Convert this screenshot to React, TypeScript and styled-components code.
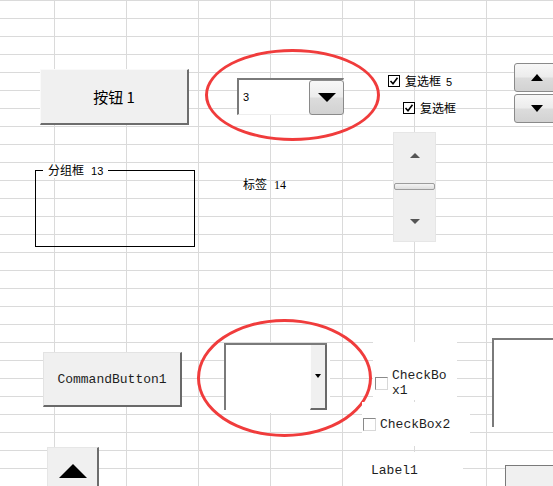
import React from 'react';
import styled, { createGlobalStyle, css } from 'styled-components';

const GlobalStyle = createGlobalStyle`
  html, body {
    margin: 0;
    padding: 0;
    background: #fff;
  }
  body {
    font-family: "Noto Sans CJK SC", "Noto Sans", sans-serif;
  }
`;

// Excel-like sheet: gridlines every 72 x 18 px, controls sit freely on it
const Sheet = styled.div`
  position: relative;
  width: 553px;
  height: 486px;
  overflow: hidden;
  background-color: #fff;
  background-image:
    linear-gradient(to right, #dadada 0 1px, transparent 1px),
    linear-gradient(to bottom, #dadada 0 1px, transparent 1px);
  background-size: 72px 18px;
  background-position: 54px 0, 0 0;
`;

const cjk = css`
  font-family: "Noto Sans CJK SC", "Noto Sans", sans-serif;
`;

const mono = css`
  font-family: "Liberation Mono", "DejaVu Sans Mono", monospace;
  font-size: 13px;
  color: #1e1e1e;
`;

const FormButton = styled.div`
  position: absolute;
  left: 40px;
  top: 69px;
  width: 149px;
  height: 56px;
  box-sizing: border-box;
  display: flex;
  align-items: center;
  justify-content: center;
  background: #f0f0f0;
  border-top: 1px solid #fafafa;
  border-left: 1px solid #fafafa;
  border-right: 2px solid #6d6d6d;
  border-bottom: 2px solid #6d6d6d;
  ${cjk};
  font-size: 15px;
  color: #000;
`;

const ComboField = styled.div`
  position: absolute;
  left: 237px;
  top: 78px;
  width: 107px;
  height: 37px;
  box-sizing: border-box;
  display: flex;
  align-items: center;
  background: #fff;
  border-top: 2px solid #7a7a7a;
  border-left: 2px solid #7a7a7a;
  border-right: 1px solid #eeeeee;
  border-bottom: 1px solid #eeeeee;
`;

const ComboValue = styled.span`
  flex: 1;
  padding-left: 4px;
  font-family: "Liberation Sans", Arial, sans-serif;
  font-size: 11px;
  color: #000;
`;

const GlossButton = styled.div<{ $h: number }>`
  width: 35px;
  height: ${p => p.$h}px;
  box-sizing: border-box;
  display: flex;
  align-items: center;
  justify-content: center;
  border: 1px solid #8a8a8a;
  border-radius: 3px;
  background: linear-gradient(to bottom, #f7f7f7 0%, #ececec 48%, #dcdcdc 52%, #d2d2d2 100%);
`;

const DropSlot = styled.div`
  align-self: flex-start;
  margin-right: -1px;
`;

const TriDown = styled.span<{ $w: number; $h: number; $c?: string }>`
  width: 0;
  height: 0;
  border-left: ${p => p.$w / 2}px solid transparent;
  border-right: ${p => p.$w / 2}px solid transparent;
  border-top: ${p => p.$h}px solid ${p => p.$c || '#000'};
`;

const TriUp = styled.span<{ $w: number; $h: number; $c?: string }>`
  width: 0;
  height: 0;
  border-left: ${p => p.$w / 2}px solid transparent;
  border-right: ${p => p.$w / 2}px solid transparent;
  border-bottom: ${p => p.$h}px solid ${p => p.$c || '#000'};
`;

const Ellipse = styled.div<{ $x: number; $y: number; $w: number; $h: number }>`
  position: absolute;
  left: ${p => p.$x}px;
  top: ${p => p.$y}px;
  width: ${p => p.$w}px;
  height: ${p => p.$h}px;
  box-sizing: border-box;
  border: 3px solid #f03c3c;
  border-radius: 50%;
  pointer-events: none;
`;

const FormCheck = styled.div<{ $x: number; $y: number }>`
  position: absolute;
  left: ${p => p.$x}px;
  top: ${p => p.$y}px;
  display: flex;
  align-items: center;
  gap: 5px;
  height: 12px;
  ${cjk};
  font-size: 12px;
  line-height: 12px;
  color: #000;
  white-space: nowrap;
`;

const Num = styled.span<{ $gap?: number }>`
  margin-left: ${p => p.$gap ?? 0}px;
  font-family: "Liberation Sans", Arial, sans-serif;
  font-size: 11px;
`;

const TickBox = styled.span`
  width: 12px;
  height: 12px;
  box-sizing: border-box;
  border: 1px solid #000;
  background: #fff;
  display: flex;
  align-items: center;
  justify-content: center;
`;

const SpinPair = styled.div`
  position: absolute;
  left: 514px;
  top: 63px;
  display: flex;
  flex-direction: column;
  gap: 2px;
  & > div {
    width: 45px;
  }
`;

const ScrollBar = styled.div`
  position: absolute;
  left: 393px;
  top: 132px;
  width: 43px;
  height: 110px;
  box-sizing: border-box;
  display: flex;
  flex-direction: column;
  align-items: center;
  padding-top: 20px;
  background: #efefef;
  border: 1px solid #e6e6e6;
`;

const ScrollThumb = styled.div`
  width: 41px;
  height: 7px;
  margin-top: 25px;
  box-sizing: border-box;
  border: 1px solid #9c9c9c;
  border-radius: 2px;
  background: linear-gradient(to bottom, #f4f4f4, #dedede);
`;

const ScrollGap = styled.div`
  height: 29px;
`;

const GroupBox = styled.div`
  position: absolute;
  left: 35px;
  top: 170px;
  width: 160px;
  height: 77px;
  box-sizing: border-box;
  border: 1px solid #000;
`;

const GroupLegend = styled.span`
  position: absolute;
  left: 7px;
  top: -8px;
  padding: 0 5px;
  background: #fff;
  ${cjk};
  font-size: 12px;
  line-height: 14px;
  color: #000;
  white-space: nowrap;
`;

const FormLabel = styled.div`
  position: absolute;
  left: 243px;
  top: 177px;
  ${cjk};
  font-size: 12px;
  line-height: 14px;
  color: #000;
  white-space: nowrap;
`;

const SerifNum = styled.span`
  margin-left: 7px;
  font-family: "Liberation Serif", "Times New Roman", serif;
  font-size: 12px;
`;

const AxButton = styled.div`
  position: absolute;
  left: 43px;
  top: 352px;
  width: 139px;
  height: 55px;
  box-sizing: border-box;
  display: flex;
  align-items: center;
  justify-content: center;
  background: #f0f0f0;
  border-top: 1px solid #e3e3e3;
  border-left: 1px solid #e3e3e3;
  border-right: 2px solid #696969;
  border-bottom: 2px solid #696969;
  ${mono};
`;

const AxCombo = styled.div`
  position: absolute;
  left: 224px;
  top: 343px;
  width: 103px;
  height: 67px;
  box-sizing: border-box;
  display: flex;
  justify-content: flex-end;
  background: #fff;
  border-top: 2px solid #7a7a7a;
  border-left: 2px solid #7a7a7a;
  box-shadow: 3px 3px 0 #fff;
`;

const AxDrop = styled.div`
  width: 17px;
  box-sizing: border-box;
  display: flex;
  align-items: center;
  justify-content: center;
  padding-bottom: 2px;
  background: #f0f0f0;
  border-left: 1px solid #fdfdfd;
  border-right: 2px solid #696969;
  border-bottom: 2px solid #696969;
`;

const AxPanel = styled.div<{ $x: number; $y: number; $w: number; $h: number; $pad: string; $top?: boolean }>`
  position: absolute;
  left: ${p => p.$x}px;
  top: ${p => p.$y}px;
  width: ${p => p.$w}px;
  height: ${p => p.$h}px;
  box-sizing: border-box;
  display: flex;
  align-items: ${p => (p.$top ? 'flex-start' : 'center')};
  padding: ${p => p.$pad};
  background: #fff;
  ${mono};
  line-height: 15px;
`;

const AxBox = styled.span`
  flex: none;
  width: 13px;
  height: 13px;
  box-sizing: border-box;
  background: #fff;
  border-top: 1px solid #8a8a8a;
  border-left: 1px solid #8a8a8a;
  border-right: 1px solid #d8d8d8;
  border-bottom: 1px solid #d8d8d8;
`;

const AxCaption = styled.span<{ $w?: number }>`
  margin-left: 4px;
  width: ${p => (p.$w ? `${p.$w}px` : 'auto')};
  word-break: break-all;
`;

const AxList = styled.div`
  position: absolute;
  left: 492px;
  top: 338px;
  width: 80px;
  height: 89px;
  box-sizing: border-box;
  background: #fff;
  border-top: 2px solid #7a7a7a;
  border-left: 2px solid #7a7a7a;
`;

const AxCornerButton = styled.div`
  position: absolute;
  left: 505px;
  top: 465px;
  width: 70px;
  height: 40px;
  box-sizing: border-box;
  background: #f0f0f0;
  border-top: 1px solid #7a7a7a;
  border-left: 1px solid #7a7a7a;
`;

const AxSpin = styled.div`
  position: absolute;
  left: 47px;
  top: 447px;
  width: 52px;
  height: 50px;
  box-sizing: border-box;
  display: flex;
  justify-content: center;
  padding-top: 16px;
  background: #f0f0f0;
  border-top: 1px solid #e6e6e6;
  border-left: 1px solid #e6e6e6;
  border-right: 2px solid #6d6d6d;
`;

const Tick: React.FC = () => (
  <svg width="10" height="10" viewBox="0 0 10 10">
    <path d="M1.5 5 L4 7.8 L8.5 1.8" fill="none" stroke="#000" strokeWidth="1.6" />
  </svg>
);

const App: React.FC = () => {
  return (
    <>
      <GlobalStyle />
      <Sheet>
        <FormButton>按钮 1</FormButton>

        <ComboField>
          <ComboValue>3</ComboValue>
          <DropSlot>
            <GlossButton $h={35}>
              <TriDown $w={18} $h={9} />
            </GlossButton>
          </DropSlot>
        </ComboField>
        <Ellipse $x={205} $y={49} $w={175} $h={92} />

        <FormCheck $x={388} $y={75}>
          <TickBox><Tick /></TickBox>
          <span>复选框<Num $gap={5}>5</Num></span>
        </FormCheck>
        <FormCheck $x={403} $y={102}>
          <TickBox><Tick /></TickBox>
          <span>复选框</span>
        </FormCheck>

        <SpinPair>
          <GlossButton $h={29}>
            <TriUp $w={13} $h={7} />
          </GlossButton>
          <GlossButton $h={29}>
            <TriDown $w={13} $h={7} />
          </GlossButton>
        </SpinPair>

        <ScrollBar>
          <TriUp $w={10} $h={5} $c="#555" />
          <ScrollThumb />
          <ScrollGap />
          <TriDown $w={10} $h={5} $c="#555" />
        </ScrollBar>

        <GroupBox>
          <GroupLegend>分组框<Num $gap={7}>13</Num></GroupLegend>
        </GroupBox>

        <FormLabel>标签<SerifNum>14</SerifNum></FormLabel>

        <AxButton>CommandButton1</AxButton>

        <AxCombo>
          <AxDrop>
            <TriDown $w={7} $h={4} />
          </AxDrop>
        </AxCombo>
        <Ellipse $x={197} $y={319} $w={175} $h={118} />

        <AxPanel $x={373} $y={342} $w={84} $h={58} $pad="24px 0 0 2px">
          <AxBox />
          <AxCaption $w={58}>CheckBox1</AxCaption>
        </AxPanel>

        <AxPanel $x={362} $y={402} $w={108} $h={44} $pad="0 0 0 1px">
          <AxBox />
          <AxCaption>CheckBox2</AxCaption>
        </AxPanel>

        <AxPanel $x={343} $y={452} $w={120} $h={40} $pad="11px 0 0 28px" $top>
          <span>Label1</span>
        </AxPanel>

        <AxList />
        <AxCornerButton />

        <AxSpin>
          <TriUp $w={28} $h={14} />
        </AxSpin>
      </Sheet>
    </>
  );
};

export default App;
